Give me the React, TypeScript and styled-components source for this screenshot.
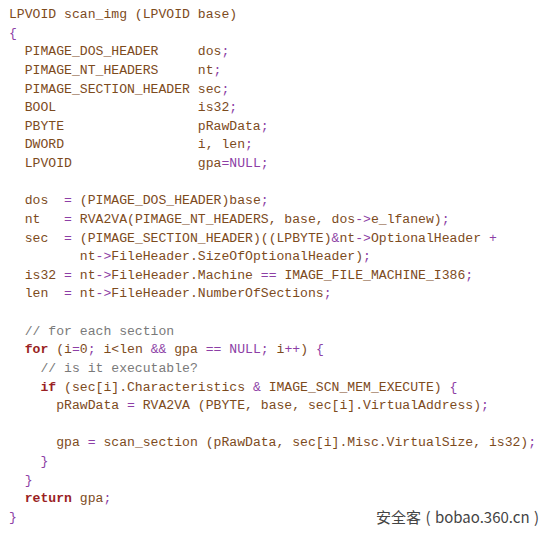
import React from "react";
import styled, { createGlobalStyle } from "styled-components";

const Global = createGlobalStyle`
  html, body { margin: 0; padding: 0; background: #ffffff; }
  #root { width: 554px; height: 535px; }
`;

const Frame = styled.div`
  position: relative;
  width: 554px;
  height: 535px;
  background: #ffffff;
  overflow: hidden;
`;

const Code = styled.pre`
  margin: 0;
  padding: 6px 0 0 9px;
  font-family: "Liberation Mono", "Courier New", monospace;
  font-size: 13.12px;
  line-height: 18.63px;
  color: #7d4b1d;
  white-space: pre;
`;

const Line = styled.div`
  height: 18.63px;
`;

type Kind = "tx" | "kw" | "pu" | "cm";

const colors: Record<Kind, string> = {
  tx: "#7d4b1d",
  kw: "#9a1f24",
  pu: "#8d3fa6",
  cm: "#7a7a7a",
};

const Tok = styled.span<{ $k: Kind }>`
  color: ${(p) => colors[p.$k]};
  font-weight: ${(p) => (p.$k === "kw" ? 700 : 400)};
`;

const Watermark = styled.div`
  position: absolute;
  right: 15px;
  bottom: 8px;
  font-family: "Noto Sans CJK SC", "Noto Sans", sans-serif;
  font-size: 15px;
  color: #444444;
  word-spacing: 1px;
`;

const source = [
  "LPVOID scan_img (LPVOID base)",
  "{",
  "  PIMAGE_DOS_HEADER     dos;",
  "  PIMAGE_NT_HEADERS     nt;",
  "  PIMAGE_SECTION_HEADER sec;",
  "  BOOL                  is32;",
  "  PBYTE                 pRawData;",
  "  DWORD                 i, len;",
  "  LPVOID                gpa=NULL;",
  "",
  "  dos  = (PIMAGE_DOS_HEADER)base;",
  "  nt   = RVA2VA(PIMAGE_NT_HEADERS, base, dos->e_lfanew);",
  "  sec  = (PIMAGE_SECTION_HEADER)((LPBYTE)&nt->OptionalHeader +",
  "         nt->FileHeader.SizeOfOptionalHeader);",
  "  is32 = nt->FileHeader.Machine == IMAGE_FILE_MACHINE_I386;",
  "  len  = nt->FileHeader.NumberOfSections;",
  "",
  "  // for each section",
  "  for (i=0; i<len && gpa == NULL; i++) {",
  "    // is it executable?",
  "    if (sec[i].Characteristics & IMAGE_SCN_MEM_EXECUTE) {",
  "      pRawData = RVA2VA (PBYTE, base, sec[i].VirtualAddress);",
  "",
  "      gpa = scan_section (pRawData, sec[i].Misc.VirtualSize, is32);",
  "    }",
  "  }",
  "  return gpa;",
  "}",
];

function tokenize(line: string): { t: string; k: Kind }[] {
  const ci = line.indexOf("//");
  if (ci >= 0) {
    return [
      { t: line.slice(0, ci), k: "tx" },
      { t: line.slice(ci), k: "cm" },
    ];
  }
  const re = /(\b(?:for|if|return)\b)|(\bNULL\b|->|==|\+\+|&&|[;{}=&+])/g;
  const out: { t: string; k: Kind }[] = [];
  let last = 0;
  let m: RegExpExecArray | null;
  while ((m = re.exec(line))) {
    if (m.index > last) out.push({ t: line.slice(last, m.index), k: "tx" });
    out.push({ t: m[0], k: m[1] ? "kw" : "pu" });
    last = m.index + m[0].length;
  }
  if (last < line.length) out.push({ t: line.slice(last), k: "tx" });
  return out;
}

export default function App() {
  return (
    <Frame>
      <Global />
      <Code>
        {source.map((line, i) => (
          <Line key={i}>
            {tokenize(line).map((tk, j) => (
              <Tok key={j} $k={tk.k}>
                {tk.t}
              </Tok>
            ))}
          </Line>
        ))}
      </Code>
      <Watermark>安全客 ( bobao.360.cn )</Watermark>
    </Frame>
  );
}
